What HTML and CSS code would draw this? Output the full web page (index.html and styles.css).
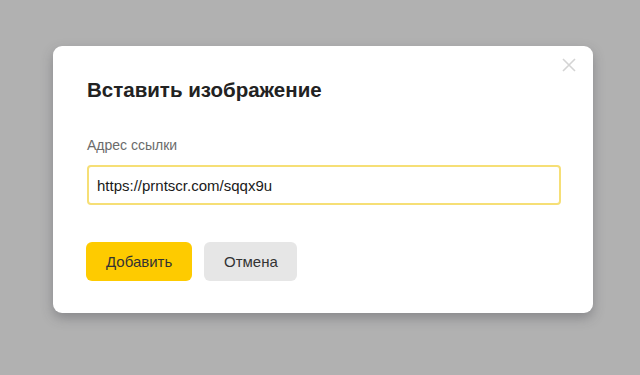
FILE: index.html
```html
<!DOCTYPE html>
<html lang="ru">
<head>
    <meta charset="UTF-8">
    <title>Вставить изображение</title>
    <link rel="stylesheet" href="styles.css">
</head>
<body>
    <div class="overlay">
        <div class="modal">
            <button class="close" aria-label="Закрыть">
                <svg width="14" height="14" viewBox="0 0 14 14"><path d="M1 1L13 13M13 1L1 13" stroke="#d4d4d4" stroke-width="1.6" fill="none"/></svg>
            </button>
            <h2 class="title">Вставить изображение</h2>
            <label class="label" for="url">Адрес ссылки</label>
            <input class="input" id="url" type="text" value="https://prntscr.com/sqqx9u">
            <div class="actions">
                <button class="btn btn-primary">Добавить</button>
                <button class="btn btn-secondary">Отмена</button>
            </div>
        </div>
    </div>
</body>
</html>
```
FILE: styles.css
```css
html, body { margin: 0; height: 100%; }
body { background: #b1b1b1; font-family: Arial, "Liberation Sans", sans-serif; }
.overlay { padding: 46px 0 0 53px; }
.modal { position: relative; box-sizing: border-box; width: 540px; padding: 32px 33px 32px 34px; background: #fff; border-radius: 9px; box-shadow: 0 5px 12px rgba(60, 60, 70, 0.35); }
.close { position: absolute; top: 12px; right: 17px; width: 14px; height: 14px; padding: 0; border: 0; background: none; }
.close svg { display: block; }
.title { margin: 0 0 34px; font-size: 20.5px; line-height: 24px; font-weight: bold; color: #222; }
.label { display: block; margin-bottom: 11px; font-size: 14px; line-height: 18px; color: #6b6b6b; }
.input { display: block; box-sizing: border-box; width: 474px; height: 40px; padding: 0 8px; border: 2px solid #f6df76; border-radius: 4px; font-family: inherit; font-size: 15px; color: #1a1a1a; outline: none; }
.actions { display: flex; gap: 12px; margin-top: 37px; margin-left: -1px; }
.btn { height: 39px; padding: 0 20px; border: 0; border-radius: 6px; font-family: inherit; font-size: 15px; color: #333; cursor: pointer; }
.btn-primary { width: 106px; background: #fecb00; }
.btn-secondary { width: 93px; background: #e6e6e6; }
```
